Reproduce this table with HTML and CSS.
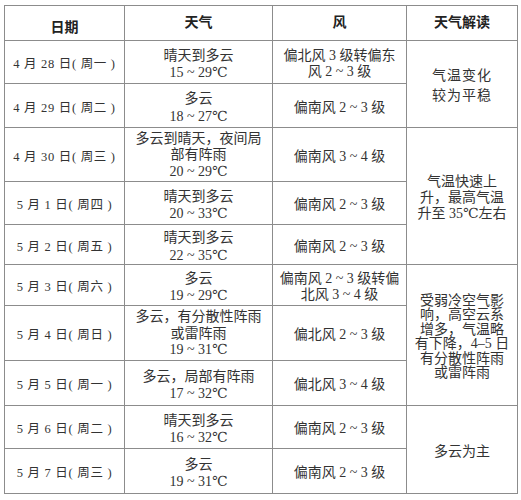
FILE: index.html
```html
<!DOCTYPE html>
<html lang="zh">
<head>
<meta charset="utf-8">
<title>天气预报</title>
<link rel="stylesheet" href="styles.css">
</head>
<body>
<table class="wx">
  <colgroup>
    <col class="c-date">
    <col class="c-sky">
    <col class="c-wind">
    <col class="c-note">
  </colgroup>
  <thead>
    <tr class="h35">
      <th class="th-date">日期</th>
      <th>天气</th>
      <th>风</th>
      <th>天气解读</th>
    </tr>
  </thead>
  <tbody>
    <tr class="h43">
      <td class="date">4 月 28 日( 周一 )</td>
      <td class="sky">晴天到多云<br>15 ~ 29℃</td>
      <td class="wind tight">偏北风 3 级转偏东<br>风 2 ~ 3 级</td>
      <td class="note wide" rowspan="2">气温变化<br>较为平稳</td>
    </tr>
    <tr class="h44">
      <td class="date">4 月 29 日( 周二 )</td>
      <td class="sky">多云<br>18 ~ 27℃</td>
      <td class="wind">偏南风 2 ~ 3 级</td>
    </tr>
    <tr class="h54">
      <td class="date">4 月 30 日( 周三 )</td>
      <td class="sky three">多云到晴天，夜间局<br>部有阵雨<br>20 ~ 29℃</td>
      <td class="wind">偏南风 3 ~ 4 级</td>
      <td class="note mid" rowspan="3">气温快速上<br>升，最高气温<br>升至 35℃左右</td>
    </tr>
    <tr class="h43">
      <td class="date">5 月 1 日( 周四 )</td>
      <td class="sky">晴天到多云<br>20 ~ 33℃</td>
      <td class="wind">偏南风 2 ~ 3 级</td>
    </tr>
    <tr class="h40">
      <td class="date">5 月 2 日( 周五 )</td>
      <td class="sky">晴天到多云<br>22 ~ 35℃</td>
      <td class="wind">偏南风 2 ~ 3 级</td>
    </tr>
    <tr class="h41">
      <td class="date">5 月 3 日( 周六 )</td>
      <td class="sky">多云<br>19 ~ 29℃</td>
      <td class="wind tight">偏南风 2 ~ 3 级转偏<br>北风 3 ~ 4 级</td>
      <td class="note dense" rowspan="3">受弱冷空气影<br>响，高空云系<br>增多，气温略<br>有下降，4–5 日<br>有分散性阵雨<br>或雷阵雨</td>
    </tr>
    <tr class="h55">
      <td class="date">5 月 4 日( 周日 )</td>
      <td class="sky three">多云，有分散性阵雨<br>或雷阵雨<br>19 ~ 31℃</td>
      <td class="wind">偏北风 2 ~ 3 级</td>
    </tr>
    <tr class="h45">
      <td class="date">5 月 5 日( 周一 )</td>
      <td class="sky">多云，局部有阵雨<br>17 ~ 32℃</td>
      <td class="wind">偏北风 3 ~ 4 级</td>
    </tr>
    <tr class="h43">
      <td class="date">5 月 6 日( 周二 )</td>
      <td class="sky">晴天到多云<br>16 ~ 32℃</td>
      <td class="wind">偏南风 2 ~ 3 级</td>
      <td class="note" rowspan="2">多云为主</td>
    </tr>
    <tr class="h45">
      <td class="date">5 月 7 日( 周三 )</td>
      <td class="sky">多云<br>19 ~ 31℃</td>
      <td class="wind">偏南风 2 ~ 3 级</td>
    </tr>
  </tbody>
</table>
</body>
</html>
```

FILE: styles.css
```css
html, body {
  margin: 0;
  padding: 0;
  background: #ffffff;
}

body {
  padding: 5px 0 0 4px;
  font-family: "Liberation Serif", "DejaVu Serif", "Noto Sans CJK SC", serif;
  color: #333333;
}

.wx {
  border-collapse: collapse;
  table-layout: fixed;
  width: 513px;
}

.c-date { width: 120px; }
.c-sky  { width: 148px; }
.c-wind { width: 134px; }
.c-note { width: 111px; }

.wx th,
.wx td {
  border: 1px solid #8c8c8c;
  padding: 4px 0 0 0;
  text-align: center;
  vertical-align: middle;
  font-size: 14px;
  line-height: 18px;
  font-weight: 400;
  white-space: nowrap;
}

.wx th {
  font-weight: 700;
  font-size: 14px;
  color: #222222;
  padding-top: 0;
}

.wx th.th-date {
  padding-top: 9px;
}

.wx td.date {
  font-size: 12.5px;
  letter-spacing: 0.7px;
}

.wx td.sky {
  line-height: 17.5px;
}

.wx td.sky.three {
  line-height: 16.5px;
  padding-top: 2px;
}

.wx td.wind.tight {
  line-height: 16px;
}

.wx td.note {
  line-height: 16px;
}

.wx td.note.wide {
  line-height: 20px;
  letter-spacing: 1px;
}

.wx td.note.dense {
  line-height: 14.5px;
}

.h35 { height: 35px; }
.h40 { height: 40px; }
.h41 { height: 41px; }
.h43 { height: 43px; }
.h44 { height: 44px; }
.h45 { height: 45px; }
.h54 { height: 54px; }
.h55 { height: 55px; }
```
